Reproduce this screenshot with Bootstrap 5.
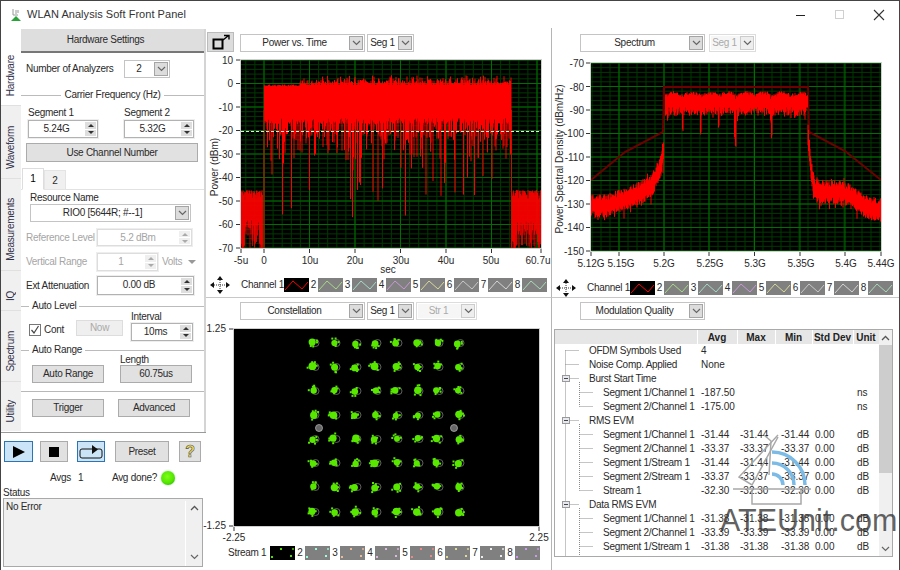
<!DOCTYPE html>
<html lang="en">
<head>
<meta charset="utf-8">
<title>WLAN Analysis Soft Front Panel</title>
<link href="https://cdn.jsdelivr.net/npm/bootstrap@5.3.0/dist/css/bootstrap.min.css" rel="stylesheet">
<style>
html,body{margin:0;background:#fff}
.app{width:900px;height:570px;overflow:hidden;position:relative;font:10px/1.2 "Liberation Sans",Arial,sans-serif;letter-spacing:-.28px;color:#2a2a2a;background:#fff;border:solid #444;border-width:1px 1px 0 1px}
.titlebar{height:27px;font-size:11px;letter-spacing:.04px;color:#333}
.titlebar .ttl{margin-left:4px;margin-top:1px}
.win{width:39px;display:flex;justify-content:center}
.winbox{margin-right:1px}
/* sidebar */
.side{width:205px;flex:none}
.side-top{height:405px;border-bottom:1px solid #9a9a9a;padding-top:1px}
.vtabs{width:20px;flex:none}
.vtab{background:#f0f0f0;justify-content:flex-end;padding-bottom:9px;border-top:1px solid #e0e0e0}
.vtab span{writing-mode:vertical-rl;transform:rotate(180deg);color:#303048}
.vtab.on{background:#fff;border-top:0}
.vh1{height:76px}.vh2{height:73px}.vh3{height:92px}.vh4{height:40px}.vh5{height:71px}.vh6{height:50px}
.panel{width:185px;flex:none;border-right:2px solid #d4d4d4}
.head{height:24px;background:#dedede;border-bottom:2px solid #777;padding-right:14px}
.r-an{margin-top:7px;height:18px;padding-left:5px}
.r-an>label{width:98px}
.grp{height:8px;margin-top:13px}
.grp::before,.grp::after{content:"";flex:1 1 0;border-top:1px solid #bbb}
.grp span{padding:0 3px;white-space:nowrap}
.grp.l::before{flex:0 0 8px}
.grp.a1{margin-top:7px}
.grp.a2{margin-top:6px}
.seg{margin-top:6px;padding-left:7px;gap:26px}
.seg .lbl{height:15px;line-height:15px}
.use{margin:5px 6px 0 5px}
.use .btn{height:19px}
.tabs{margin-top:6px;height:22px;border-bottom:1px solid #e2e2e2;padding-left:1px}
.tabs .nav-link{padding:0;font-size:10px;color:#2a2a2a;border-radius:0;background:#f0f0f0;width:22px;height:20px;line-height:20px;text-align:center;border:1px solid #e4e4e4;margin:2px 0 -1px 0}
.tabs .nav-link.active{background:#fff;height:22px;margin-top:0;border-color:#ddd #ddd #fff}
.res{padding:2px 0 0 9px}
.res label{display:block;height:12px;line-height:12px}
.rw{padding-left:5px;margin-top:7px}
.rw.e{margin-top:5px}
.rw>label{width:71px;white-space:nowrap}
.off{color:#a5a5a5}
.row-al{height:30px;padding-left:8px}
.alc{width:102px;gap:4px;padding-bottom:4px}
.ck{width:12px;height:12px;border:1px solid #777;background:#fff;display:inline-flex;margin-right:3px}
.lab-s{height:13px;line-height:13px}
.lab-t{height:11px;line-height:11px}
.ctl-g{padding-left:11px;height:29px}
.bt-g{margin-top:7px;padding-left:11px;gap:14px}
.div{border-bottom:1px solid #b8b8b8;margin-top:8px;height:0}
/* controls */
.lv{padding:0;font-size:10px;letter-spacing:-.28px;border-radius:0;background:#e1e1e1;border:1px solid #ababab;color:#2a2a2a;line-height:1}
.lv:disabled{background:#efefef;color:#aaa;border-color:#ddd;opacity:1}
.lv.blue{background:#cce4f7;border-color:#2d74b5}
.w72{width:72px;height:18px}
.now{width:47px;height:16px}
.sel{height:18px;border:1px solid #c4c4c4;background:#fff;box-shadow:inset 0 0 0 1px #fff;flex:none}
.sel .v{flex:1;text-align:center;line-height:16px}
.sel .a{width:14px;height:14px;margin:1px;background:#dcdcdc;border:1px solid #a5a5a5;display:flex;align-items:center;justify-content:center}
.sel.dis{background:#f6f6f6;border-color:#ddd;color:#aaa}
.sel.dis .a{border-color:#ccc;background:#eee}
.w47{width:47px}.w61{width:61px}.w125{width:125px}.w161{width:161px}.w46{width:46px}
.spin{border:1px solid #b2b2b2;background:#fff;flex:none;height:18px;box-shadow:0 0 0 1px #eee}
.spin .v{flex:1;text-align:center;line-height:16px}
.sb{width:11px;margin:1px;display:flex;flex-direction:column;gap:1px}
.sb i{flex:1;background:#dedede;display:flex;align-items:center;justify-content:center}
.sb i::after{content:"";border:solid transparent;border-width:0 3px 3px;border-bottom-color:#333}
.sb i+i::after{border-width:3px 3px 0;border-top-color:#333;border-bottom-color:transparent}
.spin.dis{color:#a5a5a5;border-color:#ddd}
.spin.dis i{background:#efefef}.spin.dis i::after{border-bottom-color:#aaa}.spin.dis i+i::after{border-top-color:#aaa;border-bottom-color:transparent}
.s70{width:70px}.s95{width:95px;height:17px}.s61{width:61px}.s97{width:97px;height:19px}.s62{width:62px}
.tri{border:solid transparent;border-width:4px 4px 0;border-top-color:#999;display:block;margin-left:6px}
/* bottom */
.runbar{padding:8px 0 0 3px;gap:7px}
.rb{height:21px}
.rb1{width:29px}.rb2{width:28px;margin-right:2px}.rb3{width:28px;margin-right:3px}.rb4{width:54px;margin-right:3px}.rb5{width:22px}
.q{font:bold 16px "Liberation Sans",sans-serif;color:#f6e24c;-webkit-text-stroke:.6px #555}
.avg{height:16px;margin-top:8px;padding-left:49px}
.avg .n{margin-left:7px;width:34px}
.avg .d{width:49px}
.led{width:14px;height:14px;background:radial-gradient(circle at 45% 40%,#7dff18 0,#54e600 55%,#1d9c00 100%);box-shadow:0 0 2px #9c9}
.st-l{height:12px;line-height:12px;padding-left:2px;margin-top:1px}
.st{width:200px;height:69px;margin-left:2px;margin-top:-1px;background:#f0f0f0;border:1px solid #a9a9a9;padding:2px 0 0 2px}
.st .sc{width:17px;flex:none;border-left:1px solid #fff;justify-content:space-between;padding:4px 0 6px}
/* charts */
.charts{flex:1;display:grid;grid-template-columns:346px 347px;grid-template-rows:270px 272px}
.c1{border-right:1px solid #b5b5b5}
.t1{border-bottom:1px solid #c8c8c8}
.sels{padding-top:4px;padding-left:1px}
.mx{width:27px;height:20px;margin-right:6px;background:#dcdcdc;border:1px solid #bbb}
.sels .sel{margin-top:2px;margin-right:2px}
.sels2{padding:6px 0 0 28px}
.sels3{padding:4px 0 0 34px}
.sels3 .sel{margin-right:2px}
svg.plot{display:block;overflow:visible;letter-spacing:0}
.leg{height:16px;align-items:center}
.leg .mv{margin-left:4px;width:20px;height:18px;flex:none}
.leg .cn{margin-left:11px;width:43px;white-space:nowrap}
.leg b{font-weight:400;width:9px;text-align:center;flex:none}
.sw{width:25px;height:14px;flex:none;background:#808080;display:block}
.sw.on{background:#000}
.c-r{color:#f00}.c2{color:#a8d888}.c3{color:#a4d8c8}.c4{color:#c898d8}.c5{color:#d8d898}.c6{color:#c8c8c8}.c7{color:#d4d4d4}.c8{color:#a8d8b8}
.cg{color:#50e000}.d2{color:#9fd}.d3{color:#eb9}.d4{color:#dbd}.d5{color:#e88}.d6{color:#dd9}.d7{color:#eee}.d8{color:#c9e}
.leg3 .cn{margin-left:22px;width:42px}
.leg3 b{width:10px}
.leg3{padding-top:1px}
.tblw{margin:9px 0 0 2px;width:339px;height:228px;border:1px solid #a9a9a9;overflow:hidden;position:relative}
.tbl{width:324px;flex:none;overflow:hidden;position:relative}
table.mq{table-layout:fixed;width:324px;margin:0;font-size:10px;--bs-table-bg:transparent;--bs-table-color:#2a2a2a;color:#2a2a2a;letter-spacing:0}
table.mq th,table.mq td{padding:0;height:14px;line-height:14px;border:0;white-space:nowrap;overflow:hidden}
table.mq thead th{height:14px;line-height:13px;background:#e6e6e6;border-right:1px solid #fff;border-left:1px solid #9a9a9a;font-weight:700;text-align:center;color:#222}
table.mq thead th:first-child{border-left:0}
table.mq td:nth-child(1){padding-left:34px;letter-spacing:-.28px}
table.mq td.k{padding-left:48px}
table.mq td:nth-child(2){padding-left:4px}
table.mq td:nth-child(3){padding-left:3px}
table.mq td:nth-child(4){padding-left:6px}
table.mq td:nth-child(5){padding-left:3px}
table.mq td:nth-child(6){padding-left:4px}
.tree{position:absolute;left:0;top:0;pointer-events:none}
.vsb{width:13px;flex:none;background:#f0f0f0;margin-left:0}
.vsb .up,.vsb .dn{height:15px;display:flex;align-items:center;justify-content:center}
.vsb .th{height:128px;background:#cdcdcd}
.wm{position:absolute;left:719px;top:501px;font-size:30.5px;line-height:36px;letter-spacing:0;color:rgba(55,55,55,.78);pointer-events:none}
.wmi{position:absolute;left:732px;top:430px;pointer-events:none}
</style>
</head>
<body>
<svg class="d-none" aria-hidden="true">
<symbol id="chev" viewBox="0 0 9 6"><path d="M1 1l3.5 3.5L8 1" fill="none" stroke="#666" stroke-width="1.2"/></symbol>
<symbol id="chevu" viewBox="0 0 9 6"><path d="M1 5l3.5-3.5L8 5" fill="none" stroke="#555" stroke-width="1.3"/></symbol>
<symbol id="zz" viewBox="0 0 25 14"><path d="M1 12L9 3 18 11 24 4" fill="none" stroke="currentColor" stroke-width="1"/></symbol>
<symbol id="dots" viewBox="0 0 25 14"><g fill="currentColor"><rect x="10" y="2" width="2" height="2"/><rect x="20" y="9" width="2" height="2"/><rect x="1" y="10" width="2" height="2"/><rect x="22" y="2" width="2" height="2" opacity=".7"/></g></symbol>
<symbol id="mv" viewBox="0 0 20 18"><path d="M2 9h16M10 2v14" stroke="#333" stroke-dasharray="1 1" fill="none"/><path d="M0 9l4-3v6zM20 9l-4-3v6zM10 0l3 4H7zM10 18l-3-4h6z" fill="#111"/></symbol>
</svg>

<div class="app d-flex flex-column">
  <div class="titlebar d-flex align-items-center">
    <svg width="14" height="14" viewBox="0 0 14 14" class="ms-2 flex-shrink-0"><path d="M4 1v6h5M7 2v4M9 2v3" stroke="#9a9a9a" fill="none"/><path d="M2 13l5-5 5 5z" fill="#2aa43a"/></svg>
    <span class="ttl">WLAN Analysis Soft Front Panel</span>
    <div class="ms-auto d-flex align-items-center winbox">
      <span class="win"><svg width="12" height="12" viewBox="0 0 12 12"><path d="M1 6.500h9" stroke="#222"/></svg></span>
      <span class="win"><svg width="12" height="12" viewBox="0 0 12 12"><rect x="1.500" y="1.500" width="8" height="8" fill="none" stroke="#d0d0d0"/></svg></span>
      <span class="win"><svg width="12" height="12" viewBox="0 0 12 12"><path d="M1 1l10 10M11 1L1 11" stroke="#333" stroke-width="1.1"/></svg></span>
    </div>
  </div>

  <div class="d-flex flex-grow-1">
    <div class="side d-flex flex-column">
      <div class="side-top d-flex">
        <div class="vtabs d-flex flex-column">
          <div class="vtab vh1 on d-flex flex-column align-items-center"><span>Hardware</span></div>
          <div class="vtab vh2 d-flex flex-column align-items-center"><span>Waveform</span></div>
          <div class="vtab vh3 d-flex flex-column align-items-center"><span>Measurements</span></div>
          <div class="vtab vh4 d-flex flex-column align-items-center"><span>IQ</span></div>
          <div class="vtab vh5 d-flex flex-column align-items-center"><span>Spectrum</span></div>
          <div class="vtab vh6 d-flex flex-column align-items-center"><span>Utility</span></div>
        </div>
        <div class="panel">
          <div class="head d-flex align-items-center justify-content-center">Hardware Settings</div>
          <div class="r-an d-flex align-items-center">
            <label>Number of Analyzers</label>
            <div class="sel w46 d-flex"><span class="v">2</span><span class="a"><svg width="9" height="6"><use href="#chev"/></svg></span></div>
          </div>
          <div class="grp d-flex align-items-center"><span>Carrier Frequency (Hz)</span></div>
          <div class="seg d-flex">
            <div><div class="lbl">Segment 1</div><div class="spin s70 d-flex"><span class="v">5.24G</span><span class="sb"><i></i><i></i></span></div></div>
            <div><div class="lbl">Segment 2</div><div class="spin s70 d-flex"><span class="v">5.32G</span><span class="sb"><i></i><i></i></span></div></div>
          </div>
          <div class="use"><button class="btn lv w-100 d-block">Use Channel Number</button></div>
          <ul class="nav nav-tabs tabs"><li class="nav-item"><a class="nav-link active">1</a></li><li class="nav-item"><a class="nav-link">2</a></li></ul>
          <div class="res">
            <label>Resource Name</label>
            <div class="sel w161 d-flex"><span class="v">RIO0 [5644R; #--1]</span><span class="a"><svg width="9" height="6"><use href="#chev"/></svg></span></div>
          </div>
          <div class="rw d-flex align-items-center off">
            <label>Reference Level</label>
            <div class="spin dis s95 d-flex"><span class="v">5.2 dBm</span><span class="sb"><i></i><i></i></span></div>
          </div>
          <div class="rw d-flex align-items-center off">
            <label>Vertical Range</label>
            <div class="spin dis s61 d-flex"><span class="v">1</span><span class="sb"><i></i><i></i></span></div>
            <span class="ms-1">Volts</span><span class="tri"></span>
          </div>
          <div class="rw e d-flex align-items-center">
            <label>Ext Attenuation</label>
            <div class="spin s97 d-flex"><span class="v">0.00 dB</span><span class="sb"><i></i><i></i></span></div>
          </div>
          <div class="grp a1 l d-flex align-items-center"><span>Auto Level</span></div>
          <div class="row-al d-flex">
            <div class="alc d-flex align-items-end">
              <span class="d-flex align-items-center me-2"><span class="ck"><svg width="10" height="10" viewBox="0 0 10 10"><path d="M1.5 5l2.5 3 4.5-7" fill="none" stroke="#444" stroke-width="1.2"/></svg></span>Cont</span>
              <button class="btn lv now" disabled>Now</button>
            </div>
            <div><div class="lab-s">Interval</div><div class="spin s62 d-flex"><span class="v">10ms</span><span class="sb"><i></i><i></i></span></div></div>
          </div>
          <div class="grp a2 l d-flex align-items-center"><span>Auto Range</span></div>
          <div class="ctl-g d-flex align-items-end gap-3">
            <button class="btn lv w72">Auto Range</button>
            <div><div class="lab-t">Length</div><button class="btn lv w72">60.75us</button></div>
          </div>
          <div class="div"></div>
          <div class="bt-g d-flex"><button class="btn lv w72">Trigger</button><button class="btn lv w72">Advanced</button></div>
        </div>
      </div>
      <div class="runbar d-flex">
        <button class="btn lv blue rb rb1 d-flex align-items-center justify-content-center"><svg width="14" height="14" viewBox="0 0 14 14"><path d="M1 1l12 6-12 6z" fill="#000"/></svg></button>
        <button class="btn lv rb rb2 d-flex align-items-center justify-content-center"><svg width="10" height="10"><rect width="10" height="10" fill="#000"/></svg></button>
        <button class="btn lv blue rb rb3 d-flex align-items-center justify-content-center"><svg width="24" height="15" viewBox="0 0 24 15"><rect x="1" y="5" width="22" height="9" rx="2" fill="none" stroke="#111"/><path d="M13 1l6 4.5-6 4.5z" fill="#111"/></svg></button>
        <button class="btn lv rb rb4">Preset</button>
        <button class="btn lv rb rb5 d-flex align-items-center justify-content-center"><span class="q">?</span></button>
      </div>
      <div class="avg d-flex align-items-center"><span>Avgs</span><span class="n">1</span><span class="d">Avg done?</span><span class="led rounded-circle d-inline-block"></span></div>
      <div class="st-l">Status</div>
      <div class="st d-flex"><span class="flex-grow-1">No Error</span><span class="sc d-flex flex-column align-items-center"><svg width="9" height="6"><use href="#chevu"/></svg><svg width="9" height="6"><use href="#chev"/></svg></span></div>
    </div>

    <div class="charts">
      <div class="c1 t1">
        <div class="sels d-flex">
          <button class="btn lv mx d-flex align-items-center justify-content-center"><svg width="20" height="16" viewBox="0 0 20 16"><rect x="2.5" y="5.5" width="9" height="9" fill="none" stroke="#000" stroke-width="2"/><path d="M12 6l5-4M13 1.500h5v4" fill="none" stroke="#000" stroke-width="1.400"/></svg></button>
          <div class="sel w125 d-flex"><span class="v">Power vs. Time</span><span class="a"><svg width="9" height="6"><use href="#chev"/></svg></span></div>
          <div class="sel w47 d-flex"><span class="v">Seg 1</span><span class="a"><svg width="9" height="6"><use href="#chev"/></svg></span></div>
        </div>
        <svg class="plot mt-1" id="p1" width="345" height="221" viewBox="206 56 345 221">
          <g font-size="10" fill="#2a2a2a">
            <g text-anchor="end"><text x="233" y="64">10</text><text x="233" y="87">0</text><text x="233" y="111">-10</text><text x="233" y="134">-20</text><text x="233" y="158">-30</text><text x="233" y="181">-40</text><text x="233" y="205">-50</text><text x="233" y="228">-60</text><text x="233" y="252">-70</text></g>
            <g text-anchor="middle"><text x="241" y="264">-5u</text><text x="264" y="264">0</text><text x="310" y="264">10u</text><text x="355" y="264">20u</text><text x="401" y="264">30u</text><text x="446" y="264">40u</text><text x="491" y="264">50u</text><text x="538" y="264">60.7u</text><text x="388" y="273">sec</text></g>
            <text text-anchor="middle" transform="translate(217.500 167) rotate(-90)">Power (dBm)</text>
          </g>
        </svg>
        <div class="leg d-flex">
          <svg class="mv"><use href="#mv"/></svg><span class="cn">Channel 1</span>
          <svg class="sw on c-r"><use href="#zz"/></svg><b>2</b><svg class="sw c2"><use href="#zz"/></svg><b>3</b><svg class="sw c3"><use href="#zz"/></svg><b>4</b><svg class="sw c4"><use href="#zz"/></svg><b>5</b><svg class="sw c5"><use href="#zz"/></svg><b>6</b><svg class="sw c6"><use href="#zz"/></svg><b>7</b><svg class="sw c7"><use href="#zz"/></svg><b>8</b><svg class="sw c8"><use href="#zz"/></svg>
        </div>
      </div>

      <div class="t1">
        <div class="sels2 d-flex">
          <div class="sel w125 d-flex"><span class="v">Spectrum</span><span class="a"><svg width="9" height="6"><use href="#chev"/></svg></span></div>
          <div class="sel dis w47 d-flex ms-1"><span class="v">Seg 1</span><span class="a"><svg width="9" height="6"><use href="#chev"/></svg></span></div>
        </div>
        <svg class="plot" id="p2" width="347" height="228" viewBox="552 53 347 228">
          <g font-size="10" fill="#2a2a2a">
            <g text-anchor="end"><text x="584" y="68">-70</text><text x="584" y="92">-80</text><text x="584" y="115">-90</text><text x="584" y="138">-100</text><text x="584" y="162">-110</text><text x="584" y="185">-120</text><text x="584" y="209">-130</text><text x="584" y="232">-140</text><text x="584" y="256">-150</text></g>
            <g text-anchor="middle"><text x="591" y="268">5.12G</text><text x="621" y="268">5.15G</text><text x="664" y="268">5.2G</text><text x="710" y="268">5.25G</text><text x="755" y="268">5.3G</text><text x="801" y="268">5.35G</text><text x="846" y="268">5.4G</text><text x="881" y="268">5.44G</text></g>
            <text text-anchor="middle" transform="translate(563 160) rotate(-90)">Power Spectral Density (dBm/Hz)</text>
          </g>
        </svg>
        <div class="leg d-flex">
          <svg class="mv"><use href="#mv"/></svg><span class="cn">Channel 1</span>
          <svg class="sw on c-r"><use href="#zz"/></svg><b>2</b><svg class="sw c2"><use href="#zz"/></svg><b>3</b><svg class="sw c3"><use href="#zz"/></svg><b>4</b><svg class="sw c4"><use href="#zz"/></svg><b>5</b><svg class="sw c5"><use href="#zz"/></svg><b>6</b><svg class="sw c6"><use href="#zz"/></svg><b>7</b><svg class="sw c7"><use href="#zz"/></svg><b>8</b><svg class="sw c8"><use href="#zz"/></svg>
        </div>
      </div>

      <div class="c1">
        <div class="sels3 d-flex">
          <div class="sel w125 d-flex"><span class="v">Constellation</span><span class="a"><svg width="9" height="6"><use href="#chev"/></svg></span></div>
          <div class="sel w47 d-flex"><span class="v">Seg 1</span><span class="a"><svg width="9" height="6"><use href="#chev"/></svg></span></div>
          <div class="sel dis w61 d-flex"><span class="v">Str 1</span><span class="a"><svg width="9" height="6"><use href="#chev"/></svg></span></div>
        </div>
        <svg class="plot" id="p3" width="345" height="224" viewBox="206 321 345 224">
          <g font-size="10" fill="#2a2a2a">
            <g text-anchor="end"><text x="226" y="333">1.25</text><text x="226" y="530">-1.25</text></g>
            <g text-anchor="middle"><text x="234" y="542">-2.25</text><text x="539" y="542">2.25</text></g>
          </g>
        </svg>
        <div class="leg leg3 d-flex">
          <span class="cn">Stream 1</span>
          <svg class="sw on cg"><use href="#dots"/></svg><b>2</b><svg class="sw d2"><use href="#dots"/></svg><b>3</b><svg class="sw d3"><use href="#dots"/></svg><b>4</b><svg class="sw d4"><use href="#dots"/></svg><b>5</b><svg class="sw d5"><use href="#dots"/></svg><b>6</b><svg class="sw d6"><use href="#dots"/></svg><b>7</b><svg class="sw d7"><use href="#dots"/></svg><b>8</b><svg class="sw d8"><use href="#dots"/></svg>
        </div>
      </div>

      <div>
        <div class="sels2 d-flex pt-1">
          <div class="sel w125 d-flex"><span class="v">Modulation Quality</span><span class="a"><svg width="9" height="6"><use href="#chev"/></svg></span></div>
        </div>
        <div class="tblw d-flex">
          <div class="tbl">
            <table class="table mq">
              <colgroup><col style="width:142px"><col style="width:40px"><col style="width:38px"><col style="width:37px"><col style="width:41px"><col style="width:26px"></colgroup>
              <thead><tr><th></th><th>Avg</th><th>Max</th><th>Min</th><th>Std Dev</th><th>Unit</th></tr></thead>
              <tbody>
                <tr><td>OFDM Symbols Used</td><td>4</td><td></td><td></td><td></td><td></td></tr>
                <tr><td>Noise Comp. Applied</td><td>None</td><td></td><td></td><td></td><td></td></tr>
                <tr><td>Burst Start Time</td><td></td><td></td><td></td><td></td><td></td></tr>
                <tr><td class="k">Segment 1/Channel 1</td><td>-187.50</td><td></td><td></td><td></td><td>ns</td></tr>
                <tr><td class="k">Segment 2/Channel 1</td><td>-175.00</td><td></td><td></td><td></td><td>ns</td></tr>
                <tr><td>RMS EVM</td><td></td><td></td><td></td><td></td><td></td></tr>
                <tr><td class="k">Segment 1/Channel 1</td><td>-31.44</td><td>-31.44</td><td>-31.44</td><td>0.00</td><td>dB</td></tr>
                <tr><td class="k">Segment 2/Channel 1</td><td>-33.37</td><td>-33.37</td><td>-33.37</td><td>0.00</td><td>dB</td></tr>
                <tr><td class="k">Segment 1/Stream 1</td><td>-31.44</td><td>-31.44</td><td>-31.44</td><td>0.00</td><td>dB</td></tr>
                <tr><td class="k">Segment 2/Stream 1</td><td>-33.37</td><td>-33.37</td><td>-33.37</td><td>0.00</td><td>dB</td></tr>
                <tr><td class="k">Stream 1</td><td>-32.30</td><td>-32.30</td><td>-32.30</td><td>0.00</td><td>dB</td></tr>
                <tr><td>Data RMS EVM</td><td></td><td></td><td></td><td></td><td></td></tr>
                <tr><td class="k">Segment 1/Channel 1</td><td>-31.38</td><td>-31.38</td><td>-31.38</td><td>0.00</td><td>dB</td></tr>
                <tr><td class="k">Segment 2/Channel 1</td><td>-33.39</td><td>-33.39</td><td>-33.39</td><td>0.00</td><td>dB</td></tr>
                <tr><td class="k">Segment 1/Stream 1</td><td>-31.38</td><td>-31.38</td><td>-31.38</td><td>0.00</td><td>dB</td></tr>
              </tbody>
            </table>
            <svg class="tree" width="60" height="226" viewBox="0 0 60 226">
              <g fill="none" stroke="#8a8a8a" stroke-dasharray="1 1">
                <path d="M10.500 20.500V226M10.500 20.500H24M10.500 34.500H24M10.500 48.500H24M10.500 90.500H24M10.500 174.500H24"/>
                <path d="M24.500 52V76.500M24.500 62.500H38M24.500 76.500H38"/>
                <path d="M24.500 94V160.500M24.500 104.500H38M24.500 118.500H38M24.500 132.500H38M24.500 146.500H38M24.500 160.500H38"/>
                <path d="M24.500 178V226M24.500 188.500H38M24.500 202.500H38M24.500 216.500H38"/>
              </g>
              <g fill="#e8e8f0" stroke="#999">
                <rect x="7.500" y="45.500" width="7" height="6"/><rect x="7.500" y="87.500" width="7" height="6"/><rect x="7.500" y="171.500" width="7" height="6"/>
              </g>
              <path d="M9 48.500h4M9 90.500h4M9 174.500h4" stroke="#444" fill="none"/>
            </svg>
          </div>
          <div class="vsb d-flex flex-column">
            <div class="up"><svg width="9" height="6"><use href="#chevu"/></svg></div>
            <div class="th"></div>
            <div class="flex-grow-1"></div>
            <div class="dn"><svg width="9" height="6"><use href="#chev"/></svg></div>
          </div>
        </div>
      </div>
    </div>
  </div>

  <svg class="wmi" width="120" height="75" viewBox="732 430 120 75">
    <g fill="none" stroke="#a8a8a8" stroke-width="1.500"><path d="M777 434L738 476 751 484 777 436"/><path d="M730 488H810M751 489V503H800V489"/><path d="M763 434L770 440L768 474"/></g>
    <g fill="none" stroke="#7cbbe6" stroke-width="3.500"><path d="M771 473A11 11 0 0 1 782 484"/><path d="M771 462A22 22 0 0 1 793 484"/><path d="M771 451A33 33 0 0 1 804 484"/></g>
  </svg>
  <div class="wm">ATEUnit.com</div>
</div>

<script src="https://cdn.jsdelivr.net/npm/bootstrap@5.3.0/dist/js/bootstrap.bundle.min.js"></script>
<script>
(function(){
var NS="http://www.w3.org/2000/svg";
function R(s){return function(){s|=0;s=s+0x6D2B79F5|0;var t=Math.imul(s^s>>>15,1|s);t=t+Math.imul(t^t>>>7,61|t)^t;return((t^t>>>14)>>>0)/4294967296}}
function el(p,n,a){var e=document.createElementNS(NS,n);for(var k in a)e.setAttribute(k,a[k]);p.appendChild(e);return e}
function f(v){return Math.round(v*10)/10}
function frame(svg,x0,y0,x1,y1,xMaj,yMaj,yTicks,xTicks){
  var first=svg.firstElementChild;
  var g=document.createElementNS(NS,"g");svg.insertBefore(g,first);
  el(g,"rect",{x:x0,y:y0,width:x1-x0,height:y1-y0,fill:"#000"});
  var t=el(g,"g",{});
  if(xMaj){
    var mn="",mj="",v;
    var step=xMaj[1]-xMaj[0],ms=step/5;
    for(v=xMaj[0]-10*ms;v<x1;v+=ms){if(v>x0)mn+="M"+f(v)+" "+y0+"V"+y1}
    for(v=y0;v<y1;v+=yMaj/5){mn+="M"+x0+" "+f(v)+"H"+x1}
    xMaj.forEach(function(x){mj+="M"+x+" "+y0+"V"+y1});
    for(v=y0;v<=y1+.1;v+=yMaj){mj+="M"+x0+" "+f(v)+"H"+x1}
    el(t,"path",{d:mn,stroke:"#003a00",fill:"none"});
    el(t,"path",{d:mj,stroke:"#006e00",fill:"none"});
  }
  var tk="";
  yTicks.forEach(function(y){tk+="M"+(x0-5)+" "+y+"H"+(x0-1)});
  xTicks.forEach(function(x){tk+="M"+x+" "+(y1+1)+"v4"});
  el(g,"path",{d:tk,stroke:"#333",fill:"none"});
  el(g,"rect",{x:x0-.5,y:y0-.5,width:x1-x0+1,height:y1-y0+1,fill:"none",stroke:"#cfcfcf"});
  return el(g,"svg",{x:x0,y:y0,width:x1-x0,height:y1-y0,viewBox:x0+" "+y0+" "+(x1-x0)+" "+(y1-y0)});
}
/* plot 1 */
(function(){
  var r=R(11),x,d="",svg=document.getElementById("p1"),ys=[];
  for(var k=0;k<=8;k++)ys.push(60+23.5*k);
  var n=frame(svg,241,60,541,248,[264,309.5,355,400.5,446,491.5,537],23.5,ys,[241,264,309.5,355,400.5,446,491.5,541]);
  for(x=264.5;x<511.5;x+=.5){
    var top=x<300?86.5-r()*2:85-r()*r()*11;
    var bot=118+r()*6,p=r();
    var deep=(x>340&&x<385)||(x>425&&x<505);
    if(p<.5)bot=122+r()*18;
    if(p<.2)bot=130+r()*30;
    if(p<.09)bot=145+r()*(deep?55:30);
    if(p<.015)bot=190+r()*35;
    d+="M"+f(x)+" "+f(top)+"V"+f(bot);
  }
  el(n,"path",{d:d,stroke:"#f00","stroke-width":1,fill:"none"});
  d="";
  function noise(a,b){for(x=a;x<b;x+=.5){var t=190+r()*r()*11;var b2=220+r()*16;var e=Math.min(x-a,b-x);if(r()<.22||e<4)b2=240+r()*10;d+="M"+f(x)+" "+f(t)+"V"+f(b2)}}
  noise(241,263);noise(512,541);
  el(n,"path",{d:d,stroke:"#f00","stroke-width":.8,fill:"none"});
  el(n,"path",{d:"M264 110V248M511.500 110V248",stroke:"#c81000",fill:"none"});
  el(n,"path",{d:"M241 131.500H541",stroke:"#e8e8e8","stroke-dasharray":"3 2",fill:"none"});
})();
/* plot 2 */
(function(){
  var r=R(5),svg=document.getElementById("p2"),ys=[];
  for(var k=0;k<=8;k++)ys.push(64+23.5*k);
  var n=frame(svg,591,64,881,252,[619,664,709,754.5,800,845],23.5,ys,[591,619,664,709,754.5,800,845,881]);
  el(n,"path",{d:"M591 181L625 153 663 133 664 88H808L809 133 845 152 881 181",stroke:"#6e0000","stroke-width":2,fill:"none"});
  function lin(P,x){for(var i=1;i<P.length;i++){if(x<=P[i][0]){var a=P[i-1],b=P[i];return a[1]+(b[1]-a[1])*(x-a[0])/(b[0]-a[0])}}return P[P.length-1][1]}
  var L=[[591,207],[605,207],[625,201],[640,194],[652,186],[660,170],[664,150]],
      Rr=[[808,135],[811,170],[815,192],[825,193],[842,193],[855,200],[868,209],[881,211]],d="",x;
  function seg(P,a,b){for(x=a;x<b;x+=.5){var c=lin(P,x);var u=c-5-r()*7,v=c+5+r()*7;if(r()<.06)u-=4;if(r()<.07)v+=7;d+="M"+f(x)+" "+f(u)+"V"+f(v)}}
  seg(L,591,664);seg(Rr,808,881);
  var sp={668:122,683:134,701:136,719:129,736:150,735:140,772:140,771:125,690:118,745:116,795:120};
  for(x=665.5;x<808;x+=.5){
    var ph=(x-665)/18,l=Math.abs(Math.sin(ph*Math.PI));
    var top=92+(1-l)*3+r()*4,bot=108+r()*9;
    if(r()<.05)bot+=6;
    var rk=Math.round(x);if(sp[rk])bot=Math.max(bot,sp[rk]-r()*4);
    if(rk==736||rk==771)top=100;
    d+="M"+f(x)+" "+f(top)+"V"+f(bot);
  }
  el(n,"path",{d:d,stroke:"#f00","stroke-width":1,fill:"none"});
})();
/* constellation */
(function(){
  var r=R(23),svg=document.getElementById("p3");
  var n=frame(svg,234,330,539,527,null,0,[330,527],[234,539]);
  var X=[314,335,356,376,397,418,438,459],Y=[344,368,392,416,440,464,488,513];
  X.forEach(function(x){Y.forEach(function(y){
    el(n,"circle",{cx:x+1.5,cy:y,r:3.5,fill:"none",stroke:"#777","stroke-width":.8});
    var ox=x-1+(r()-.5)*2,oy=y+(r()-.5)*2,rad=3+r()*.9;
    el(n,"circle",{cx:f(ox),cy:f(oy),r:f(rad),fill:"#58e800"});
    for(var i=0;i<4;i++){var a=r()*6.28,q=rad+r()*1.8;el(n,"rect",{x:f(ox+Math.cos(a)*q-1),y:f(oy+Math.sin(a)*q-1),width:2,height:2,fill:"#58e800"})}
  })});
  [[319,429],[454,429]].forEach(function(p){el(n,"circle",{cx:p[0],cy:p[1],r:3.5,fill:"#666",stroke:"#aaa","stroke-width":.8})});
})();
})();
</script>
</body>
</html>
